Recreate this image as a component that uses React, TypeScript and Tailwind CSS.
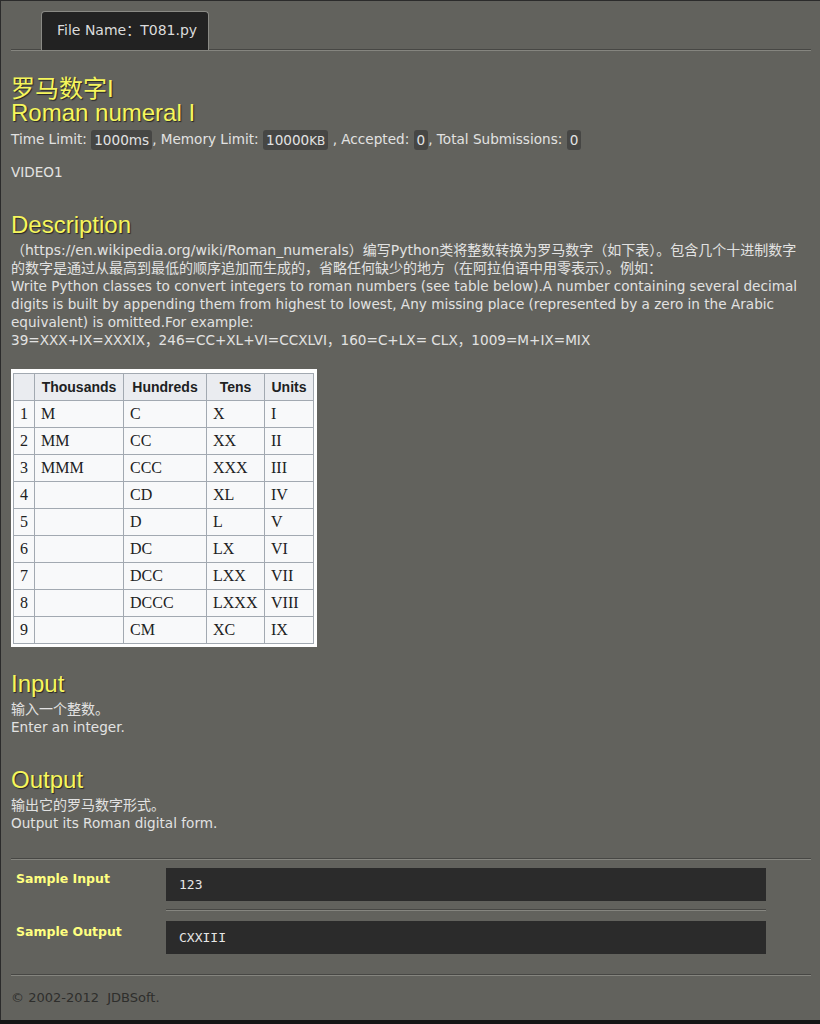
const rows: [string, string, string, string, string][] = [
  ["1", "M", "C", "X", "I"],
  ["2", "MM", "CC", "XX", "II"],
  ["3", "MMM", "CCC", "XXX", "III"],
  ["4", "", "CD", "XL", "IV"],
  ["5", "", "D", "L", "V"],
  ["6", "", "DC", "LX", "VI"],
  ["7", "", "DCC", "LXX", "VII"],
  ["8", "", "DCCC", "LXXX", "VIII"],
  ["9", "", "CM", "XC", "IX"],
];

const body = "font-['DejaVu_Sans','Noto_Sans_CJK_SC',sans-serif]";
const heading =
  "font-['Liberation_Sans','Noto_Sans_CJK_SC',sans-serif] text-[24px] leading-[24px] text-[#f6f65c] [text-shadow:1px_1px_1px_#262626]";

function Badge({ children }: { children: React.ReactNode }) {
  return (
    <span className="inline-block h-[20px] px-[3px] leading-[20px] rounded-[3px] bg-[#464644] align-middle">
      {children}
    </span>
  );
}

function RomanTable() {
  const th = "border border-[#a2a9b1] bg-[#eaecf0] font-['Liberation_Sans',sans-serif] font-bold text-[14px] text-center";
  const td = "border border-[#a2a9b1] px-[6px] text-left";
  return (
    <div className="mt-[20px] inline-block bg-white pl-[2px] pt-[4px] pr-[3px] pb-[3px]">
      <table className="table-fixed border-collapse bg-[#f8f9fa] text-[#202122] font-['Liberation_Serif',serif] text-[16px]">
        <colgroup>
          <col className="w-[21px]" />
          <col className="w-[89px]" />
          <col className="w-[83px]" />
          <col className="w-[58px]" />
          <col className="w-[49px]" />
        </colgroup>
        <thead>
          <tr className="h-[27px]">
            <th className={th}></th>
            <th className={th}>Thousands</th>
            <th className={th}>Hundreds</th>
            <th className={th}>Tens</th>
            <th className={th}>Units</th>
          </tr>
        </thead>
        <tbody>
          {rows.map((r) => (
            <tr key={r[0]} className="h-[27px]">
              <td className="border border-[#a2a9b1] text-center">{r[0]}</td>
              <td className={td}>{r[1]}</td>
              <td className={td}>{r[2]}</td>
              <td className={td}>{r[3]}</td>
              <td className={td}>{r[4]}</td>
            </tr>
          ))}
        </tbody>
      </table>
    </div>
  );
}

export default function App() {
  return (
    <div className="h-[1024px] bg-[#151515] overflow-hidden">
      <div className={`h-[1020px] bg-[#62625d] border-t border-l border-[#2b2b2b] pl-[10px] text-[13.6px] text-[#e2e2e2] ${body}`}>
        <div className="w-[800px]">
          {/* tab bar */}
          <div className="pt-[10px] border-b border-[#85857f] shadow-[0_-1px_0_#474744_inset]">
            <div className="ml-[30px] w-[168px] h-[39px] bg-[#222222] border border-b-0 border-[#8a8a85] rounded-t-[4px] pl-[15px] leading-[37px] text-[14px] text-[#dcdcdc]">
              File Name：T081.py
            </div>
          </div>

          {/* title */}
          <h1 className={`mt-[26px] ${heading}`}>罗马数字I</h1>
          <h1 className={heading}>Roman numeral I</h1>
          <div className="mt-[4px] h-[20px] leading-[20px]">
            Time Limit: <Badge>1000ms</Badge>, Memory Limit: <Badge>10000<span className="text-[12px]">KB</span></Badge> , Accepted: <Badge>0</Badge>, Total Submissions: <Badge>0</Badge>
          </div>
          <p className="mt-[14px] leading-[18px]">VIDEO1</p>

          {/* description */}
          <h2 className={`mt-[32px] ${heading}`}>Description</h2>
          <div className="mt-[4px] leading-[18px]">
            <p className="text-[14px]">
              （https://en.wikipedia.org/wiki/Roman_numerals）编写Python类将整数转换为罗马数字（如下表）。包含几个十进制数字
              <br />
              的数字是通过从最高到最低的顺序追加而生成的，省略任何缺少的地方（在阿拉伯语中用零表示）。例如：
            </p>
            <p>
              Write Python classes to convert integers to roman numbers (see table below).A number containing several decimal
              <br />
              digits is built by appending them from highest to lowest, Any missing place (represented by a zero in the Arabic
              <br />
              equivalent) is omitted.For example:
            </p>
            <p>39=XXX+IX=XXXIX，246=CC+XL+VI=CCXLVI，160=C+LX= CLX，1009=M+IX=MIX</p>
          </div>
          <RomanTable />

          {/* input */}
          <h2 className={`mt-[20px] ${heading}`}>Input</h2>
          <div className="mt-[4px] leading-[18px]">
            <p className="text-[14px]">输入一个整数。</p>
            <p>Enter an integer.</p>
          </div>

          {/* output */}
          <h2 className={`mt-[32px] ${heading}`}>Output</h2>
          <div className="mt-[4px] leading-[18px]">
            <p className="text-[14px]">输出它的罗马数字形式。</p>
            <p>Output its Roman digital form.</p>
          </div>

          {/* samples */}
          <div className="mt-[26px] border-t border-[#474744] border-b border-b-[#85857f] h-0" />
          <div className="grid grid-cols-[155px_600px] pt-[8px] pb-[20px]">
            <div className="pl-[5px] pt-[3px] text-[12.5px] font-bold leading-[16px] text-[#ffff80]">Sample Input</div>
            <div>
              <div className="h-[33px] bg-[#2b2b2b] pl-[13px] leading-[33px] text-[13px] text-[#e6e6e6] font-['DejaVu_Sans_Mono',monospace]">123</div>
              <div className="mt-[8px] border-t border-[#474744] border-b border-b-[#85857f] h-0" />
            </div>
            <div className="pl-[5px] pt-[13px] text-[12.5px] font-bold leading-[16px] text-[#ffff80]">Sample Output</div>
            <div className="pt-[10px]">
              <div className="h-[33px] bg-[#2b2b2b] pl-[13px] leading-[33px] text-[13px] text-[#e6e6e6] font-['DejaVu_Sans_Mono',monospace]">CXXIII</div>
            </div>
          </div>
          <div className="border-t border-[#474744] border-b border-b-[#85857f] h-0" />
          <p className="mt-[13px] text-[13px] leading-[18px] text-[#2e2e2c]">© 2002-2012&nbsp; JDBSoft.</p>
        </div>
      </div>
    </div>
  );
}
